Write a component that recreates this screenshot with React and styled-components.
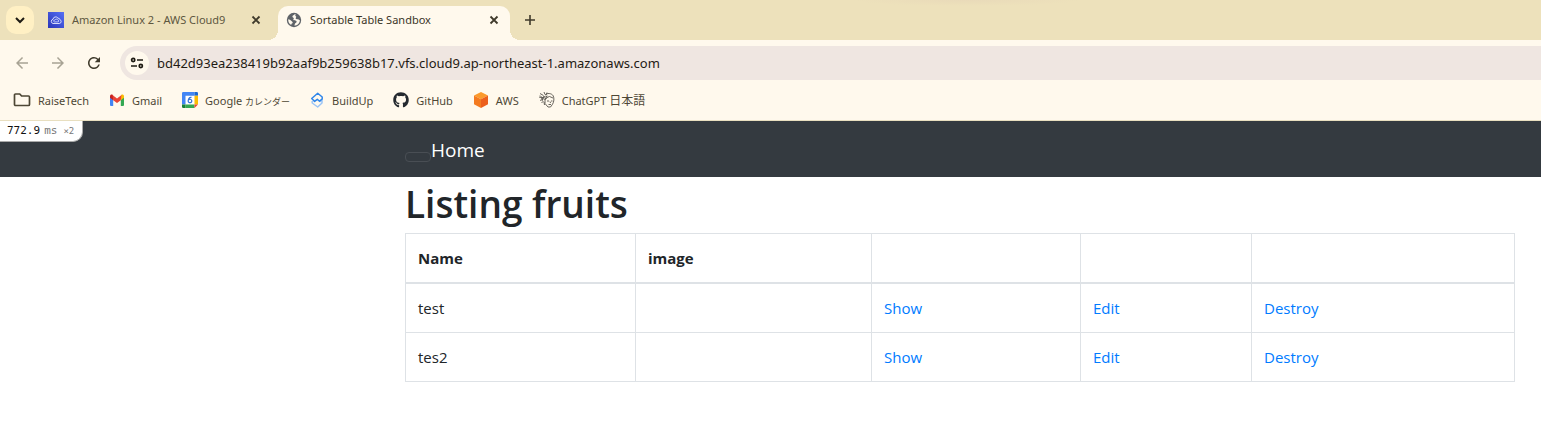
import React from "react";
import styled, { createGlobalStyle } from "styled-components";
import { FaGithub } from "react-icons/fa";
import { MdRefresh, MdArrowBack, MdArrowForward } from "react-icons/md";

const GlobalStyle = createGlobalStyle`
  *, *::before, *::after { box-sizing: border-box; }
  body {
    margin: 0;
    background: #fff;
    color: #212529;
    font-family: "Open Sans", "Noto Sans CJK JP", sans-serif;
    font-size: 15px;
    line-height: 24px;
  }
  button { border: 0; padding: 0; margin: 0; background: none; font: inherit; color: inherit; }
  svg { display: block; flex: none; }
`;

const Browser = styled.header`
  background: #fff9ed;
  border-bottom: 1px solid #e8dfc0;
  font-family: "Noto Sans", "Noto Sans CJK JP", sans-serif;
  font-size: 11px;
  line-height: 16px;
  color: #4d4735;
`;

const TabStrip = styled.div`
  display: flex;
  height: 40px;
  padding: 6px 6px 0;
  background: radial-gradient(ellipse at 50% 0, #e9dab9, #ede1bb 70%) 65% 0 / 230px 6px no-repeat #ede1bb;
`;

const TabSearch = styled.button`
  display: grid;
  place-items: center;
  width: 28px;
  height: 28px;
  border-radius: 10px;
  background: #fff0c4;
  color: #1e1b13;
`;

const Tab = styled.div`
  position: relative;
  display: flex;
  align-items: center;
  gap: 8px;
  margin-left: ${(p) => (p.$active ? "0" : "4px")};
  width: ${(p) => (p.$active ? "232px" : "240px")};
  padding: ${(p) => (p.$active ? "0 10px 6px 8px" : "0 16px 6px 10px")};
  border-radius: 10px 10px 0 0;
  background: ${(p) => (p.$active ? "#fff9ed" : "transparent")};
  color: ${(p) => (p.$active ? "#3a3527" : "#5d573f")};

  &::before, &::after {
    content: "";
    display: ${(p) => (p.$active ? "block" : "none")};
    position: absolute;
    bottom: 0;
    width: 10px;
    height: 10px;
  }
  &::before { right: 100%; background: radial-gradient(circle at 0 0, transparent 10px, #fff9ed 10px); }
  &::after { left: 100%; background: radial-gradient(circle at 100% 0, transparent 10px, #fff9ed 10px); }
`;

const TabTitle = styled.span`
  flex: 1;
  white-space: nowrap;
`;

const IconButton = styled.button`
  display: grid;
  place-items: center;
  width: ${(p) => p.$size}px;
  height: ${(p) => p.$size}px;
  color: ${(p) => (p.$dim ? "#a8a394" : "#3f3a2b")};
`;

const NewTab = styled(IconButton)`
  margin-left: 6px;
`;

const Toolbar = styled.div`
  display: flex;
  align-items: center;
  gap: 8px;
  padding: 6px 0 6px 8px;
`;

const AddressBar = styled.div`
  flex: 1;
  display: flex;
  align-items: center;
  gap: 8px;
  height: 34px;
  margin-left: 4px;
  padding-left: 5px;
  border-radius: 17px 0 0 17px;
  background: #efe6e1;
`;

const SiteInfo = styled.button`
  display: grid;
  place-items: center;
  width: 24px;
  height: 24px;
  border-radius: 50%;
  background: #fff9ed;
  color: #1e1b13;
`;

const Url = styled.input`
  flex: 1;
  border: 0;
  padding: 0;
  background: transparent;
  color: #1f1b14;
  font: 13px/20px "Noto Sans", sans-serif;
  outline: none;
`;

const Bookmarks = styled.nav`
  display: flex;
  gap: 20px;
  height: 34px;
  padding: 0 13px 6px;
`;

const Bookmark = styled.a`
  display: flex;
  align-items: center;
  gap: 7px;
  color: #4d4735;
  text-decoration: none;
  white-space: nowrap;
`;

const BookmarkLabel = styled.span`
  padding-top: 2px;
`;

const Kana = styled.span`
  font-size: 9px;
`;

const Kanji = styled.span`
  font-size: 12px;
`;

const Page = styled.main`
  position: relative;
`;

const Profiler = styled.div`
  position: absolute;
  top: 0;
  left: 0;
  display: flex;
  align-items: baseline;
  gap: 4px;
  height: 21px;
  padding: 0 8px 0 7px;
  border-radius: 0 0 10px 0;
  border: 1px solid #aaa;
  border-width: 0 1px 1px 0;
  background: #fff;
  color: #111;
  font: 11px/20px "DejaVu Sans Mono", monospace;
`;

const Unit = styled.span`
  color: #777;
`;

const Calls = styled.small`
  margin-left: 2px;
  font-size: 9px;
  color: #777;
`;

const Navbar = styled.nav`
  display: flex;
  align-items: center;
  height: 56px;
  padding-left: 405px;
  background: #343a40;
`;

const Toggler = styled.button`
  width: 26px;
  height: 10px;
  margin-top: 16px;
  border: 1px solid #494e54;
  border-radius: 4px;
`;

const Brand = styled.a`
  padding-top: 2px;
  color: #fff;
  font-size: 19px;
  line-height: 30px;
  text-decoration: none;
`;

const Content = styled.section`
  padding: 0 26px 42px 405px;
`;

const Heading = styled.h1`
  margin: 0 0 6px;
  padding-top: 4px;
  font-size: 37px;
  font-weight: 600;
  line-height: 46px;
`;

const Table = styled.table`
  width: 100%;
  border-collapse: collapse;
  table-layout: fixed;
  border: 1px solid #dee2e6;
`;

const Col = styled.col`
  width: ${(p) => p.$width};
`;

const Th = styled.th`
  height: 49px;
  padding: 12px;
  border: 1px solid #dee2e6;
  border-bottom-width: 2px;
  text-align: left;
  font-weight: 700;
`;

const Td = styled.td`
  height: 49px;
  padding: 12px;
  border: 1px solid #dee2e6;
`;

const Action = styled.a`
  color: #007bff;
  text-decoration: none;
`;

const Stroke = ({ size, d, width = 2 }) => (
  <svg width={size} height={size} viewBox={`0 0 ${size} ${size}`} fill="none" stroke="currentColor" strokeWidth={width}>
    <path d={d} />
  </svg>
);

const CloseIcon = () => <Stroke size={12} d="M2.500 2.500l7 7M9.500 2.500l-7 7" width={1.8} />;

const CloudIcon = () => (
  <svg width="16" height="16" viewBox="0 0 16 16" fill="none">
    <defs>
      <linearGradient id="cloud" x1="0" y1="1" x2="1" y2="0">
        <stop stopColor="#2a35b8" />
        <stop offset="1" stopColor="#5670f5" />
      </linearGradient>
    </defs>
    <path fill="url(#cloud)" d="M0 0h16v16H0z" />
    <path stroke="#e6e9ff" strokeWidth=".9" d="M5 11.5h6.2a2 2 0 0 0 .6-3.9A1.6 1.6 0 0 0 10 6.200 2.700 2.700 0 0 0 5 7.300a2.150 2.150 0 0 0 0 4.200z" />
    <path stroke="#e6e9ff" strokeWidth=".8" d="M6.300 9.900h3.500a.9.9 0 0 0 0-1.800A1.500 1.500 0 0 0 7 8.100a.9.9 0 0 0-.7 1.800z" />
  </svg>
);

const GlobeIcon = () => (
  <svg width="16" height="16" viewBox="0 0 16 16">
    <circle cx="8" cy="8" r="7.200" fill="#5f6368" />
    <path fill="#fff9ed" d="M8.500 2.200c-.4 1.200-2 1-2.100 2.300-.1 1 1.200.8 1.400 1.700.2.800-.9 1.200-.4 1.900.5.600 1.900.1 2.700.7.900.7.500 1.800-.4 2.200-.8.300-.9 1.400-1.400 2.600 3.200 0 5.500-2.400 5.600-5.300-.9-.2-1-.9-1.800-1.100-.9-.2-1.800.2-2.300-.5-.5-.8.500-1.200.4-2-.100-.6-.9-.4-.9-1.200 0-.5.300-.9.500-1.200zM2.200 7.200c1.200.4 2.300.6 3 1.500.7.800 1.700 1 1.500 2-.2.700-1.200.6-1.400 1.500v.9C3.200 12 2 9.700 2.200 7.200z" />
  </svg>
);

const TuneIcon = () => (
  <svg width="14" height="14" viewBox="0 0 14 14" fill="none" stroke="currentColor" strokeWidth="1.700">
    <circle cx="3.200" cy="4" r="1.600" />
    <path d="M7 4h6M1 10h6" />
    <circle cx="10.800" cy="10" r="1.600" />
  </svg>
);

const FolderIcon = () => (
  <svg width="18" height="16" viewBox="0 0 18 16" fill="none" stroke="#4d4735" strokeWidth="1.7" strokeLinejoin="round">
    <path d="M2.500 2h4.300l1.800 2h6.900a1 1 0 0 1 1 1v7.500a1 1 0 0 1-1 1h-13a1 1 0 0 1-1-1V3a1 1 0 0 1 1-1z" />
  </svg>
);

const GmailIcon = () => (
  <svg width="16" height="16" viewBox="0 0 16 16">
    <path fill="#4285f4" d="M1 4v9a1 1 0 0 0 1 1h2.200V6z" />
    <path fill="#34a853" d="M15 4v9a1 1 0 0 1-1 1h-2.200V6z" />
    <path fill="#fbbc04" d="M11.800 4.300V8.200L15 5.800V4.400c0-1.600-1.700-2.300-2.800-1.400z" />
    <path fill="#c5221f" d="M1 4.400v1.400l3.200 2.400V4.300L3.800 3C2.700 2.100 1 2.800 1 4.400z" />
    <path fill="#ea4335" d="M3.500 2.900L8 6.400l4.500-3.500-.7 5.300L8 11 4.200 8.200z" />
  </svg>
);

const CalendarIcon = () => (
  <svg width="16" height="16" viewBox="0 0 16 16">
    <path fill="#fff" d="M3.500 3.500h9v9h-9z" />
    <path fill="#4285f4" d="M1.200 0h11.300v3.700h-9v8.800H0V1.200A1.200 1.200 0 0 1 1.200 0z" />
    <path fill="#1967d2" d="M12.500 0h2.300A1.200 1.200 0 0 1 16 1.200v2.500h-3.500z" />
    <path fill="#fbbc04" d="M12.500 3.700H16v8.800h-3.500z" />
    <path fill="#34a853" d="M3.500 12.500h9V16h-9z" />
    <path fill="#188038" d="M0 12.500h3.500V16H1.200A1.200 1.200 0 0 1 0 14.800z" />
    <path fill="#ea4335" d="M12.500 12.500H16L12.500 16z" />
    <path fill="none" stroke="#2f70d6" strokeWidth="1.200" d="M9.500 5.400C7.200 5 6.200 7 6.200 9.100a1.800 1.700 0 1 0 .4-1.200" />
  </svg>
);

const BuildUpIcon = () => (
  <svg width="15" height="16" viewBox="0 0 15 16" fill="none" strokeWidth="1.500" strokeLinejoin="round">
    <path stroke="#9cc5f5" d="M2.200 9v2l5.500 4 4.300-4V7.500L9.500 10" />
    <path stroke="#2f86ea" d="M7.700 1.200L12.200 5v2L9.500 9.200 7.300 7.300 4.600 9.400 1.700 6.500z" />
  </svg>
);

const CubeIcon = () => (
  <svg width="16" height="16" viewBox="0 0 16 16">
    <path fill="#fb9a2c" d="M8 0l7 3.600L8 7.300 1 3.600z" />
    <path fill="#f47b20" d="M1 3.600l7 3.700V16l-7-3.700z" />
    <path fill="#ec5f1c" d="M15 3.600L8 7.300V16l7-3.700z" />
  </svg>
);

const FaceIcon = () => (
  <svg width="16" height="16" viewBox="0 0 16 16" fill="none" stroke="#57544d" strokeWidth=".9">
    <path d="M1 1.500l3.500 2M0 5l4 1M1 8.500l3-1.500M2.500 11l2-2M5 0l1 2.500M1 3.500l4 4M3 9l2-5M5.500 13L5 10M8 .5l-1 3M2 6.500l4-2" />
    <path d="M6 3c2-2.200 6.500-2 8.200.8 1.200 2.500.8 6-.7 8.500L11.500 15H9l-3-3.500V8l2-2.500 2.500-1 3.500 1.500M8 9h2M12 9h1.500M9.500 12.500h2.500M11 9.500l.5 1.500M5.500 5.500l3-1.500M5 7.500l3-2" />
  </svg>
);

const bookmarks = [
  { label: "RaiseTech", icon: <FolderIcon /> },
  { label: "Gmail", icon: <GmailIcon /> },
  { label: <>Google <Kana>カレンダー</Kana></>, icon: <CalendarIcon /> },
  { label: "BuildUp", icon: <BuildUpIcon /> },
  { label: "GitHub", icon: <FaGithub size={16} color="#24292f" /> },
  { label: "AWS", icon: <CubeIcon /> },
  { label: <>ChatGPT <Kanji>日本語</Kanji></>, icon: <FaceIcon /> },
];

const columns = ["230px", "236px", "209px", "171px", "auto"];
const fruits = ["test", "tes2"];

export default function App() {
  return (
    <>
      <GlobalStyle />
      <Browser>
        <TabStrip>
          <TabSearch aria-label="Search tabs"><Stroke size={12} d="M2 4l4 4 4-4" /></TabSearch>
          <Tab>
            <CloudIcon />
            <TabTitle>Amazon Linux 2 - AWS Cloud9</TabTitle>
            <IconButton $size={12} aria-label="Close tab"><CloseIcon /></IconButton>
          </Tab>
          <Tab $active>
            <GlobeIcon />
            <TabTitle>Sortable Table Sandbox</TabTitle>
            <IconButton $size={12} aria-label="Close tab"><CloseIcon /></IconButton>
          </Tab>
          <NewTab $size={28} aria-label="New tab"><Stroke size={12} d="M6 1v10M1 6h10" width={1.6} /></NewTab>
        </TabStrip>
        <Toolbar>
          <IconButton $size={28} $dim aria-label="Back"><MdArrowBack size={18} /></IconButton>
          <IconButton $size={28} $dim aria-label="Forward"><MdArrowForward size={18} /></IconButton>
          <IconButton $size={28} aria-label="Reload"><MdRefresh size={18} /></IconButton>
          <AddressBar>
            <SiteInfo aria-label="Site information"><TuneIcon /></SiteInfo>
            <Url aria-label="Address" defaultValue="bd42d93ea238419b92aaf9b259638b17.vfs.cloud9.ap-northeast-1.amazonaws.com" />
          </AddressBar>
        </Toolbar>
        <Bookmarks aria-label="Bookmarks">
          {bookmarks.map((b, i) => (
            <Bookmark href="#" key={i}>{b.icon}<BookmarkLabel>{b.label}</BookmarkLabel></Bookmark>
          ))}
        </Bookmarks>
      </Browser>
      <Page>
        <Navbar>
          <Toggler aria-label="Toggle navigation" />
          <Brand href="#">Home</Brand>
        </Navbar>
        <Profiler><span>772.9</span><Unit>ms</Unit><Calls>×2</Calls></Profiler>
        <Content>
          <Heading>Listing fruits</Heading>
          <Table>
            <colgroup>{columns.map((w, i) => <Col key={i} $width={w} />)}</colgroup>
            <thead>
              <tr><Th>Name</Th><Th>image</Th><Th /><Th /><Th /></tr>
            </thead>
            <tbody>
              {fruits.map((name) => (
                <tr key={name}>
                  <Td>{name}</Td>
                  <Td />
                  <Td><Action href="#">Show</Action></Td>
                  <Td><Action href="#">Edit</Action></Td>
                  <Td><Action href="#">Destroy</Action></Td>
                </tr>
              ))}
            </tbody>
          </Table>
        </Content>
      </Page>
    </>
  );
}
